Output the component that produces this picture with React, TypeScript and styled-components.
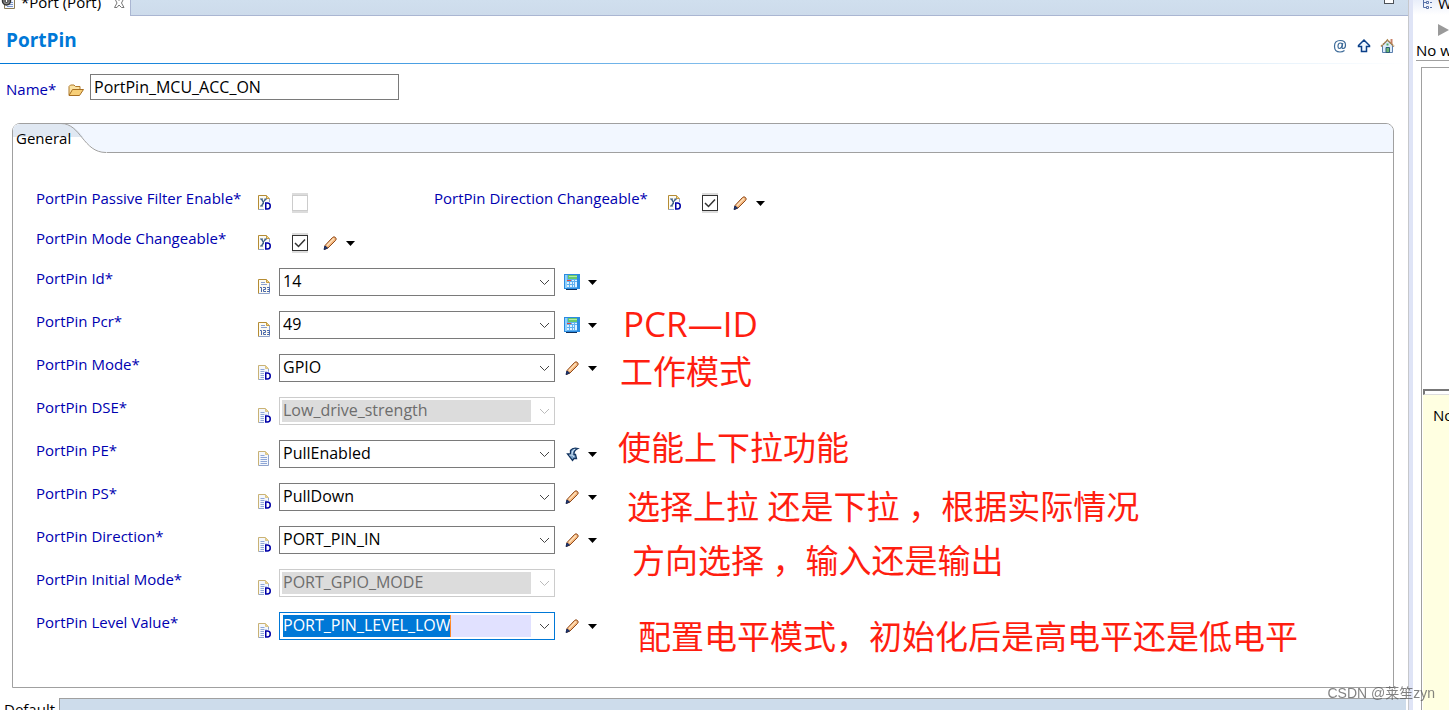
import React, { useState } from "react";
import styled, { createGlobalStyle } from "styled-components";

const GlobalStyle = createGlobalStyle`
  * { box-sizing: border-box; }
  body {
    margin: 0;
    overflow: hidden;
    background: #fff;
    color: #000;
    font: 15px/22px "Open Sans", "Noto Sans CJK SC", sans-serif;
  }
  svg { display: block; }
`;

const Workbench = styled.div`
  display: flex;
  height: 100vh;
  overflow: hidden;
`;

const Editor = styled.main`
  position: relative;
  flex: 1;
  min-width: 0;
  display: flex;
  flex-direction: column;
  border-right: 1px solid #c6c8cc;
`;

const TabStrip = styled.div`
  display: flex;
  flex: none;
  align-items: flex-end;
  justify-content: space-between;
  height: 16px;
  background: linear-gradient(#d0dfee, #cddbeb);
`;

const EditorTab = styled.div`
  display: flex;
  align-items: flex-end;
  align-self: stretch;
  width: 131px;
  padding-left: 1px;
  gap: 4px;
  background: #fff;
  border-right: 1px solid #aab6d2;
`;

const TabTitle = styled.span`
  flex: 1;
  white-space: nowrap;
  line-height: 28px;
`;

const TabGlyph = styled.span`
  width: 16px;
  padding-bottom: 7px;
`;

const StripRest = styled.div`
  display: flex;
  flex: 1;
  align-self: stretch;
  justify-content: flex-end;
  padding-right: 14px;
  border-bottom: 1px solid #aab6d2;
`;

const MinimizeButton = styled.button`
  width: 10px;
  height: 4px;
  padding: 0;
  background: #fff;
  border: 1px solid #4d5258;
  border-top: 0;
`;

const Header = styled.header`
  display: flex;
  flex: none;
  justify-content: space-between;
  align-items: center;
  height: 47px;
  padding: 0 12px 0 6px;
`;

const Title = styled.h1`
  margin: 0;
  font-size: 19px;
  line-height: 24px;
  font-weight: 700;
  color: #0078d7;
`;

const HeaderRule = styled.div`
  flex: none;
  height: 1px;
  background: linear-gradient(to right, #0078d7, #fff);
`;

const HeaderTools = styled.div`
  display: flex;
  gap: 8px;
  padding-top: 12px;
`;

const IconButton = styled.button`
  display: block;
  width: 16px;
  height: 16px;
  padding: 0;
  border: 0;
  background: none;
`;

const NameRow = styled.div`
  display: flex;
  flex: none;
  align-items: center;
  padding: 10px 6px 0;
`;

const NameLabel = styled.label`
  width: 62px;
  padding-top: 4px;
  color: #0000b0;
`;

const NameIcon = styled.span`
  width: 22px;
  padding-top: 5px;
`;

const NameInput = styled.input`
  width: 309px;
  height: 26px;
  padding: 0 3px;
  border: 1px solid #7a7a7a;
  border-radius: 0;
  color: #000;
  font: inherit;
  font-size: 16px;
`;

const Group = styled.section`
  display: flex;
  flex: 1;
  min-height: 0;
  flex-direction: column;
  margin: 23px 14px 10px 12px;
  border: 1px solid #a0a0a0;
  border-radius: 8px 8px 0 0;
`;

const GroupHeader = styled.div`
  flex: none;
  position: relative;
  height: 29px;
  background: #f2f7ff;
  border-bottom: 1px solid #a0a0a0;
  border-radius: 7px 7px 0 0;
`;

const GroupTabShape = styled.svg`
  position: absolute;
  left: 0;
  top: -1px;
`;

const GroupTitle = styled.h2`
  position: relative;
  margin: 0;
  padding: 3px;
  font-size: 15px;
  line-height: 22px;
  font-weight: 400;
`;

const Form = styled.div`
  padding: 35px 23px 0;
`;

const FlagRow = styled.div`
  display: flex;
  height: 40px;
`;

const Flag = styled.div`
  display: flex;
  width: 398px;
`;

const FieldRow = styled.div`
  display: flex;
  height: 43px;
`;

const FieldLabel = styled.label<{ $wide?: boolean }>`
  width: ${(p) => (p.$wide ? 233 : 221)}px;
  line-height: 20px;
  color: #0000b0;
  white-space: nowrap;
`;

const StatusIcon = styled.span<{ $drop: number; $width: number }>`
  flex: none;
  width: ${(p) => p.$width}px;
  padding-top: ${(p) => p.$drop}px;
`;

const CheckFrame = styled.span`
  position: relative;
  width: 16px;
  height: 20px;
  margin: 5px 14px 0 0;
  padding: 2px 0;
  background: #dcdcdc;
  svg {
    position: absolute;
    left: 0;
    top: 2px;
    pointer-events: none;
    visibility: hidden;
  }
  input:checked + svg { visibility: visible; }
`;

const CheckInput = styled.input`
  appearance: none;
  display: block;
  width: 16px;
  height: 16px;
  margin: 0;
  background: #fff;
  border: 1px solid #333;
  &:disabled { border-color: #ccc; }
`;

const Combo = styled.span<{ $state?: string }>`
  display: flex;
  align-items: center;
  width: 276px;
  height: 28px;
  padding: 2px;
  background: #fff;
  border: 1px solid
    ${(p) => (p.$state === "disabled" ? "#ccc" : p.$state === "focused" ? "#0078d7" : "#7a7a7a")};
`;

const ComboSelect = styled.select<{ $state?: string }>`
  appearance: none;
  width: 249px;
  height: 22px;
  padding: 0 1px 2px;
  border: 0;
  border-radius: 0;
  outline: 0;
  font: inherit;
  font-size: 16px;
  line-height: 20px;
  opacity: 1;
  color: ${(p) => (p.$state === "disabled" ? "#6d6d6d" : p.$state === "focused" ? "#fff" : "#000")};
  background: ${(p) =>
    p.$state === "disabled"
      ? "#dcdcdc"
      : p.$state === "focused"
      ? "linear-gradient(to right, #fff 1px, #0078d7 1px 168px, #ff8728 168px 169px, #e1e1ff 169px)"
      : "#fff"};
`;

const ComboArrow = styled.svg`
  margin-left: 8px;
`;

const Actions = styled.span<{ $top: number; $left: number }>`
  display: flex;
  align-items: center;
  gap: 8px;
  height: 16px;
  margin: ${(p) => p.$top}px 0 0 ${(p) => p.$left}px;
`;

const MenuButton = styled.button`
  padding: 0;
  border: 0;
  background: none;
`;

const PageTabs = styled.nav`
  display: flex;
  flex: none;
  height: 12px;
  padding-right: 2px;
  overflow: hidden;
`;

const PageTab = styled.a`
  width: 59px;
  padding-left: 4px;
  color: #000;
  text-decoration: none;
`;

const PageTabsRest = styled.div`
  flex: 1;
  background: #cddceb;
  border-top: 1px solid #a0a0a0;
  border-left: 1px solid #a0a0a0;
`;

const Note = styled.p<{ $x: number; $y: number; $latin?: boolean }>`
  position: absolute;
  left: ${(p) => p.$x}px;
  top: ${(p) => p.$y}px;
  margin: 0;
  color: #ff1e10;
  font-size: ${(p) => (p.$latin ? 35 : 33)}px;
  line-height: 40px;
  font-weight: 400;
  font-family: "Open Sans", "Noto Sans CJK SC", sans-serif;
  white-space: pre;
`;

const Sash = styled.div`
  flex: none;
  width: 4px;
  background: #dfe4f6;
`;

const SideView = styled.aside`
  display: flex;
  flex: none;
  flex-direction: column;
  width: 36px;
  overflow: hidden;
  white-space: nowrap;
`;

const SideTab = styled.div`
  display: flex;
  flex: none;
  align-items: flex-end;
  gap: 5px;
  height: 15px;
  padding-left: 8px;
  background: linear-gradient(#e9eefa, #fff);
  span { line-height: 24px; }
  svg { margin-bottom: 5px; flex: none; }
`;

const SideTools = styled.div`
  flex: none;
  height: 24px;
  padding: 9px 0 0 25px;
`;

const SideMessage = styled.div`
  flex: none;
  height: 22px;
  margin-left: 3px;
  border-bottom: 1px solid #a0a0a0;
`;

const SideTree = styled.div`
  flex: none;
  height: 322px;
  margin: 6px 0 0 8px;
  border-top: 1px solid #a0a0a0;
  border-left: 1px solid #a0a0a0;
`;

const SideDetailFrame = styled.div`
  flex: 1;
  margin-left: 8px;
  padding-left: 1px;
  border-left: 1px solid #a0a0a0;
`;

const SideDetailEdge = styled.div`
  height: 6px;
  border-top: 2px solid #777;
  border-left: 2px solid #777;
  border-bottom: 1px solid #ddd;
`;

const SideDetail = styled.div`
  height: 100%;
  padding: 9px 0 0 10px;
  background: #ffffe1;
`;

const Watermark = styled.div`
  position: fixed;
  right: 14px;
  bottom: 6px;
  color: rgba(90, 90, 90, 0.75);
  font: 14px/22px "Liberation Sans", "Noto Sans CJK SC", sans-serif;
`;

const DocBase = ({ faded }: { faded?: boolean }) => (
  <>
    <path d="M1.5 1.5h8l3 3v11h-11z" fill={faded ? "#f4f7fc" : "#fdfbf2"} />
    <path d="M12.5 5v10.5h-11" fill="none" stroke="#8fa3cc" />
    <path d="M1.5 15.5v-14h8l3 3" fill="none" stroke={faded ? "#c9b275" : "#b58c34"} />
    <path d="M9.5 1.5v3h3" fill="#eed48c" stroke={faded ? "#d8c48c" : "#c59a40"} />
  </>
);

const BadgeD = () => (
  <>
    <path d="M7 7.500h4q4 1 4 4.500t-4 4H7z" fill="#fff" />
    <path d="M8.750 9h1.500q3 0 3 3t-3 3h-1.500z" fill="#fff" stroke="#0000a8" strokeWidth="1.500" />
  </>
);

const XdIcon = () => (
  <svg width="16" height="17" viewBox="0 0 16 17">
    <DocBase />
    <path d="M4.500 5l4 7M8.500 5l-4 7" stroke="#3f5f86" strokeWidth="1.500" />
    <path d="M3 5h3M3 12h3M7.500 5h2.500" stroke="#3f5f86" />
    <BadgeD />
  </svg>
);

const NumberDocIcon = () => (
  <svg width="16" height="17" viewBox="0 0 16 17">
    <DocBase />
    <path d="M4 4.500h4M4 6.500h6" stroke="#8aa0cf" />
    <path
      d="M3 9.500h1.500V14M6 9.500h2.500v2H6.500v2H9M10 9.500h2.500v4H10M10.500 11.500h2"
      fill="none"
      stroke="#4a68ab"
    />
  </svg>
);

const DocIcon = ({ badge }: { badge?: boolean }) => (
  <svg width="16" height="17" viewBox="0 0 16 17">
    <g transform="translate(1 0)">
      <path d="M.5 1.500h7l3 3v11H.5z" fill="#f4f7fc" />
      <path d="M10.500 5v10.500H.5" fill="none" stroke="#8fa3cc" />
      <path d="M.5 15.500v-14h7l3 3" fill="none" stroke="#c9b275" />
      <path d="M7.500 1.500v3h3" fill="#eed48c" stroke="#d8c48c" />
      <path d="M2.500 5.500h4M2.500 7.500h6.500M2.500 9.500h6.500M2.500 11.500h6.500M2.500 13.500h6.500" stroke="#8ea6d6" />
    </g>
    {badge && <BadgeD />}
  </svg>
);

const PencilIcon = () => (
  <svg width="16" height="16" viewBox="0 0 16 16">
    <path d="M3 10.500L10.500 2.500q1.500-1.500 3 0t0 3L6 13l-3.500 1.500z" fill="#f4b67c" stroke="#8f4a1c" />
    <path d="M5 10.500l7-7" stroke="#ffe3bd" strokeWidth="1.500" />
    <path d="M3 11L5.500 13l-3.500 1.500z" fill="#1d3c78" stroke="#15295c" />
  </svg>
);

const CalculatorIcon = () => (
  <svg width="16" height="16" viewBox="0 0 16 16">
    <path d="M2 2h11v14H2z" fill="#0e2f5c" />
    <path d="M0 0h16v15H0z" fill="#2a8be0" />
    <path d="M1 1h2v13H1z" fill="#8fd0fb" />
    <path d="M3 1h10v13H3z" fill="#5fb0f0" />
    <path d="M4 1h9v4H4z" fill="#66c96b" />
    <path d="M5 2h8v1H5z" fill="#b5eba5" />
    <path d="M3 6h4v1H3z" fill="#e0483a" />
    <path d="M8 6h2v1H8zM11 6h2v1h-2zM3 8h2v2H3zM6 8h2v2H6zM9 8h1v2H9zM3 11h2v2H3zM6 11h2v2H6zM9 11h1v2H9zM11 8h2v5h-2z" fill="#dff2ff" />
  </svg>
);

const DerivedIcon = () => (
  <svg width="16" height="16" viewBox="0 0 16 16">
    <path
      d="M14 2.500Q9 1 6.500 4.500V8H3.500L8.500 14.500l1.500-2h2.500L11.500 8.500h-1.500Q9.500 4.500 14 2.500z"
      fill="#7fa6cc"
      stroke="#143560"
      strokeWidth="1.300"
    />
    <path d="M8 8q-.5-3.500 3-5M5.500 9h3l1.500 2" fill="none" stroke="#d5e6f5" />
  </svg>
);

const Triangle = () => (
  <svg width="9" height="5" viewBox="0 0 9 5">
    <path d="M0 0h9L4.500 5z" />
  </svg>
);

const FolderIcon = () => (
  <svg width="16" height="16" viewBox="0 0 16 16">
    <path d="M1 13V4.500L2.500 3h3.500l1.500 1.500H12V8" fill="#fbe3a4" stroke="#b07a2a" />
    <path d="M1 13.500L4.500 7.500h11L11.500 13.500z" fill="#f7cf78" stroke="#a86f22" />
  </svg>
);

const FileTabIcon = () => (
  <svg width="16" height="16" viewBox="0 0 16 16">
    <path d="M3.500 1.500h9l1 1v13h-10z" fill="#f3f7ff" stroke="#8a7a55" />
    <path d="M6 11.500h6M6 13.500h6M10 9.500h2" stroke="#7a94c8" />
    <circle cx="5.500" cy="8" r="4" fill="#888" stroke="#333" strokeWidth="1.500" />
    <circle cx="5.500" cy="8" r="1.500" fill="#fff" stroke="#333" />
  </svg>
);

const CloseGlyph = () => (
  <svg width="12" height="12" viewBox="0 0 12 12">
    <path
      d="M.5 1h2.500L5 3.500 7.500 1H10L7.500 6 10 10.500H7.500L5 8 3 10.500H.5L3 6z"
      fill="#fff"
      stroke="#777"
    />
  </svg>
);

const AtIcon = () => (
  <svg width="16" height="16" viewBox="0 0 16 16" fill="none" stroke="#3c6a98" strokeWidth="1.200">
    <path d="M12.500 12.500Q10.500 14 8 14 2.500 14 2.500 8.200 2.500 2.500 8.300 2.500 13.500 2.500 13.500 7q0 3.500-2.300 3.500-1.500 0-1.200-1.500l.8-4" />
    <path d="M10.300 7.200Q10.300 5 8.500 5 6 5 6 8.500q0 2 1.500 2 2 0 2.800-3.300z" />
  </svg>
);

const UpIcon = () => (
  <svg width="16" height="16" viewBox="0 0 16 16">
    <path d="M8 2L2.500 7.500V8.500H5.500v5h5v-5h3V7.500z" fill="#eef6ff" stroke="#0a3f88" strokeWidth="1.500" />
  </svg>
);

const HomeIcon = () => (
  <svg width="16" height="16" viewBox="0 0 16 16">
    <path d="M10.500 1h2v5h-2z" fill="#c9826a" />
    <path d="M2.500 7.500v7h10v-7L7.500 2.500z" fill="#dcecfb" stroke="#5b7fae" />
    <path d="M1 8.500L7.500 2l6.500 6.500" fill="none" stroke="#a98149" strokeWidth="1.600" strokeDasharray="2 .5" />
    <path d="M6.500 5.500h2v2h-2z" fill="#4dae60" />
    <path d="M6 9.500h3.500v5H6z" fill="#6cb874" stroke="#2b5c78" />
  </svg>
);

const HierarchyIcon = () => (
  <svg width="12" height="12" viewBox="0 0 12 12" fill="none" stroke="#5872a8">
    <path d="M2.500 0v9.500h3M2.500 4.500h3" />
    <path d="M5.500 3.500h2v2h-2zM5.500 8.500h2v2h-2zM9 4.500h2M9 9.500h2" />
  </svg>
);

type State = "disabled" | "focused";
type Action = "calc" | "pencil" | "derived";

interface Field {
  label: string;
  value: string;
  icon: "number" | "default" | "plain";
  action?: Action;
  state?: State;
}

const FIELDS: Field[] = [
  { label: "PortPin Id*", value: "14", icon: "number", action: "calc" },
  { label: "PortPin Pcr*", value: "49", icon: "number", action: "calc" },
  { label: "PortPin Mode*", value: "GPIO", icon: "default", action: "pencil" },
  { label: "PortPin DSE*", value: "Low_drive_strength", icon: "default", state: "disabled" },
  { label: "PortPin PE*", value: "PullEnabled", icon: "plain", action: "derived" },
  { label: "PortPin PS*", value: "PullDown", icon: "default", action: "pencil" },
  { label: "PortPin Direction*", value: "PORT_PIN_IN", icon: "default", action: "pencil" },
  { label: "PortPin Initial Mode*", value: "PORT_GPIO_MODE", icon: "default", state: "disabled" },
  { label: "PortPin Level Value*", value: "PORT_PIN_LEVEL_LOW", icon: "default", action: "pencil", state: "focused" },
];

const NOTES = [
  { text: "PCR—ID", x: 623, y: 304, latin: true },
  { text: "工作模式", x: 620, y: 352 },
  { text: "使能上下拉功能", x: 618, y: 428 },
  { text: "选择上拉 还是下拉 ，根据实际情况", x: 627, y: 487 },
  { text: "方向选择 ，输入还是输出", x: 632, y: 541 },
  { text: "配置电平模式，初始化后是高电平还是低电平", x: 638, y: 617 },
];

function ActionMenu({ kind, top, left }: { kind: Action; top: number; left: number }) {
  return (
    <Actions $top={top} $left={left}>
      <IconButton aria-label="Edit value">
        {kind === "calc" ? <CalculatorIcon /> : kind === "pencil" ? <PencilIcon /> : <DerivedIcon />}
      </IconButton>
      <MenuButton aria-label="More actions">
        <Triangle />
      </MenuButton>
    </Actions>
  );
}

function FlagField({ id, label, wide, initial, disabled }: {
  id: string; label: string; wide?: boolean; initial?: boolean; disabled?: boolean;
}) {
  const [checked, setChecked] = useState(!!initial);
  return (
    <Flag>
      <FieldLabel htmlFor={id} $wide={wide}>{label}</FieldLabel>
      <StatusIcon $drop={6} $width={35}><XdIcon /></StatusIcon>
      <CheckFrame>
        <CheckInput id={id} type="checkbox" disabled={disabled} checked={checked} onChange={() => setChecked(!checked)} />
        <svg width="16" height="16" viewBox="0 0 16 16">
          <path d="M3 8l3.500 3.500L13 4.500" fill="none" stroke="#333" strokeWidth="1.500" />
        </svg>
      </CheckFrame>
      {!disabled && <ActionMenu kind="pencil" top={7} left={0} />}
    </Flag>
  );
}

function ComboField({ field, id }: { field: Field; id: string }) {
  return (
    <FieldRow>
      <FieldLabel htmlFor={id}>{field.label}</FieldLabel>
      <StatusIcon $drop={10} $width={22}>
        {field.icon === "number" ? <NumberDocIcon /> : <DocIcon badge={field.icon === "default"} />}
      </StatusIcon>
      <Combo $state={field.state}>
        <ComboSelect id={id} $state={field.state} disabled={field.state === "disabled"} defaultValue={field.value}>
          <option>{field.value}</option>
        </ComboSelect>
        <ComboArrow width="11" height="7" viewBox="0 0 11 7">
          <path d="M1 1l4.500 4.500L10 1" fill="none" stroke={field.state === "disabled" ? "#bbb" : "#444"} />
        </ComboArrow>
      </Combo>
      {field.action && <ActionMenu kind={field.action} top={6} left={9} />}
    </FieldRow>
  );
}

export default function App() {
  return (
    <Workbench>
      <GlobalStyle />
      <Editor>
        <TabStrip>
          <EditorTab>
            <TabGlyph><FileTabIcon /></TabGlyph>
            <TabTitle>*Port (Port)</TabTitle>
            <TabGlyph><CloseGlyph /></TabGlyph>
          </EditorTab>
          <StripRest><MinimizeButton aria-label="Minimize" /></StripRest>
        </TabStrip>
        <Header>
          <Title>PortPin</Title>
          <HeaderTools>
            <IconButton aria-label="Annotations"><AtIcon /></IconButton>
            <IconButton aria-label="Up"><UpIcon /></IconButton>
            <IconButton aria-label="Home"><HomeIcon /></IconButton>
          </HeaderTools>
        </Header>
        <HeaderRule />
        <NameRow>
          <NameLabel htmlFor="name">Name*</NameLabel>
          <NameIcon><FolderIcon /></NameIcon>
          <NameInput id="name" defaultValue="PortPin_MCU_ACC_ON" />
        </NameRow>
        <Group>
          <GroupHeader>
            <GroupTabShape width="94" height="31" viewBox="0 0 94 31">
              <path d="M0 31V8Q0 1 7 1H50C66 1 72 29 94 29.500V31z" fill="#fff" />
              <path d="M0 14V8Q0 1 7 1H50Q62 2 70 14z" fill="#e0e8f2" />
              <path d="M48 .5C68 .5 70 29.500 93 29.500" fill="none" stroke="#a0a0a0" />
            </GroupTabShape>
            <GroupTitle>General</GroupTitle>
          </GroupHeader>
          <Form>
            <FlagRow>
              <FlagField id="passive" label="PortPin Passive Filter Enable*" disabled />
              <FlagField id="dirchange" label="PortPin Direction Changeable*" wide initial />
            </FlagRow>
            <FlagRow>
              <FlagField id="modechange" label="PortPin Mode Changeable*" initial />
            </FlagRow>
            {FIELDS.map((f, i) => (
              <ComboField key={f.label} field={f} id={`field-${i}`} />
            ))}
          </Form>
        </Group>
        <PageTabs>
          <PageTab href="#default">Default</PageTab>
          <PageTabsRest />
        </PageTabs>
        {NOTES.map((n) => (
          <Note key={n.text} $x={n.x} $y={n.y} $latin={n.latin}>{n.text}</Note>
        ))}
      </Editor>
      <Sash />
      <SideView>
        <SideTab><HierarchyIcon /><span>W</span></SideTab>
        <SideTools>
          <svg width="11" height="12" viewBox="0 0 11 12"><path d="M0 0v12l11-6z" fill="#9a9a9a" /></svg>
        </SideTools>
        <SideMessage>No w</SideMessage>
        <SideTree />
        <SideDetailFrame>
          <SideDetailEdge />
          <SideDetail>No</SideDetail>
        </SideDetailFrame>
      </SideView>
      <Watermark>CSDN @莱笙zyn</Watermark>
    </Workbench>
  );
}
